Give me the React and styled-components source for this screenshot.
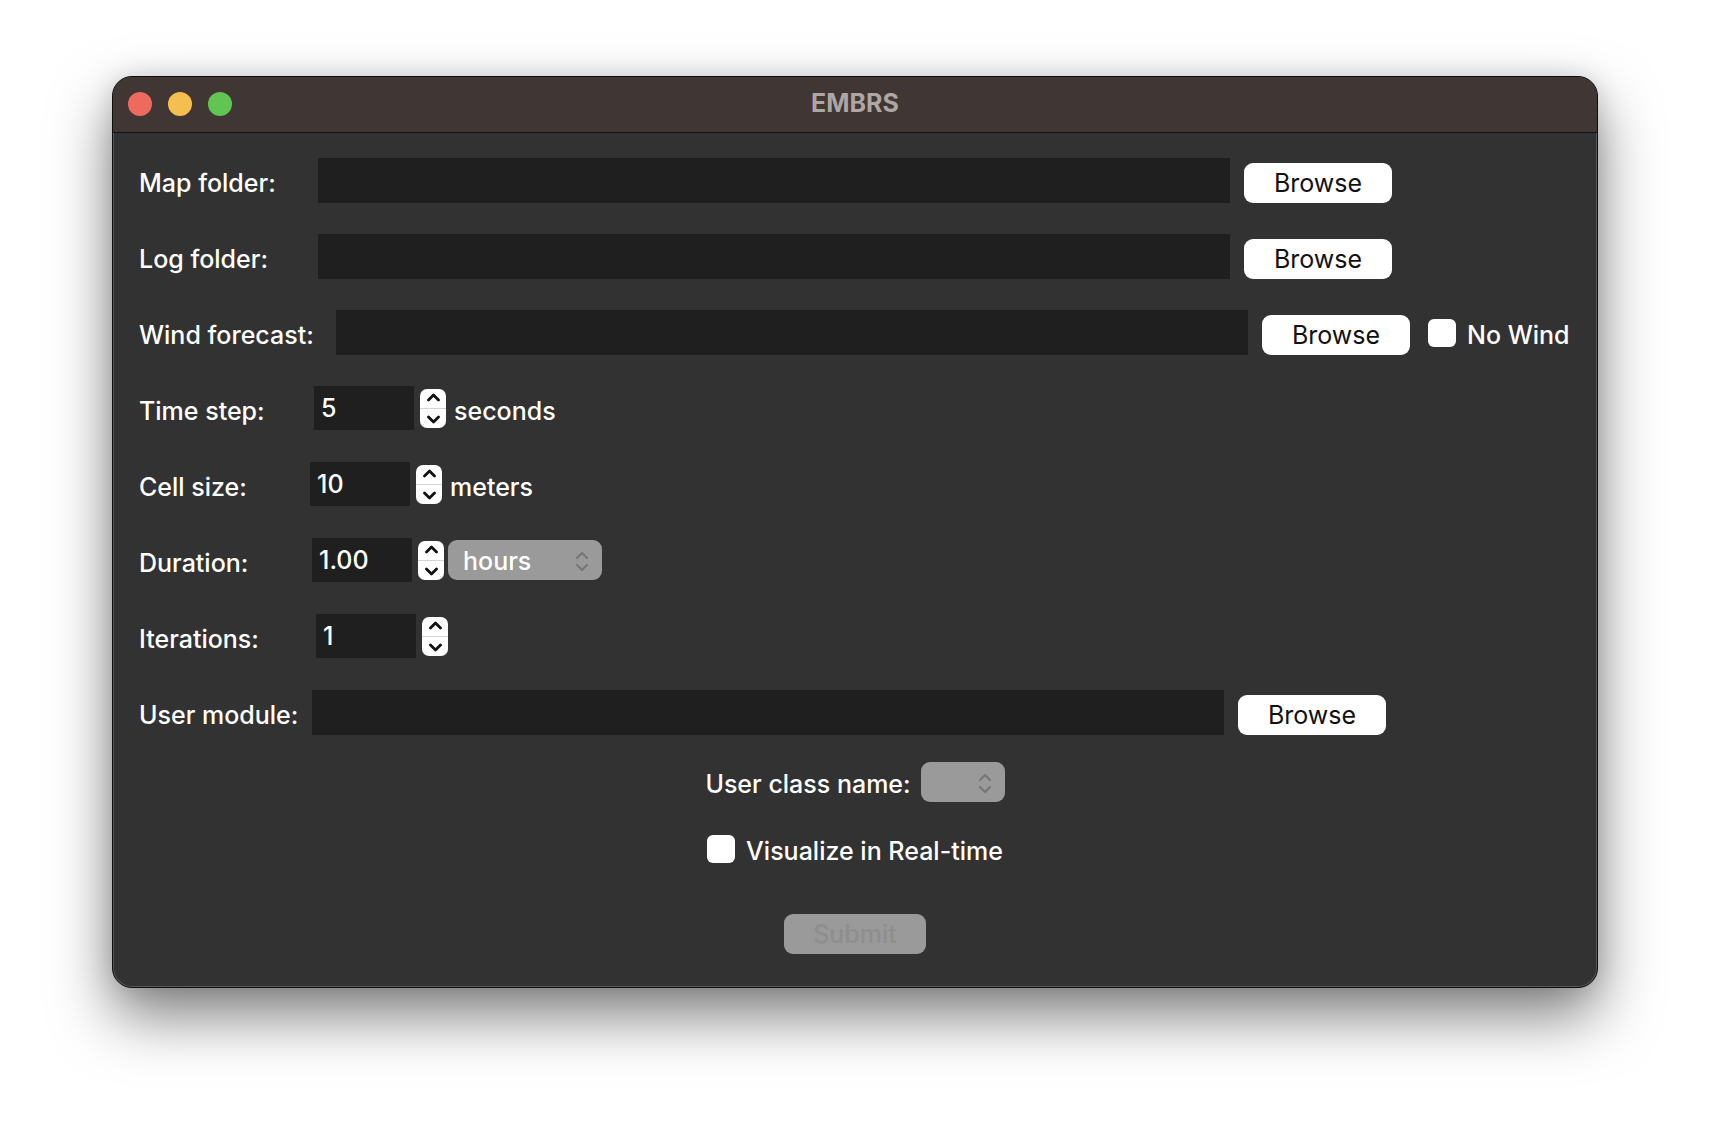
import styled, { createGlobalStyle } from "styled-components";

const GlobalStyle = createGlobalStyle`
    html, body {
        margin: 0;
        padding: 0;
        background: #ffffff;
        font-family: Inter, "Noto Sans", "Liberation Sans", sans-serif;
    }
    * { box-sizing: border-box; }
`;

function Chevrons({ color = "#777" }) {
    return (
        <svg width="14" height="21" viewBox="0 0 14 21">
            <path d="M2 7 L7 2 L12 7" fill="none" stroke={color} strokeWidth="2.2" strokeLinecap="round" strokeLinejoin="round" />
            <path d="M2 14 L7 19 L12 14" fill="none" stroke={color} strokeWidth="2.2" strokeLinecap="round" strokeLinejoin="round" />
        </svg>
    );
}

function Spinner() {
    return (
        <StSpinner>
            <StHalf $top>
                <svg width="13" height="9" viewBox="0 0 13 9">
                    <path d="M1.5 7 L6.5 2 L11.5 7" fill="none" stroke="#111" strokeWidth="2.8" strokeLinecap="round" strokeLinejoin="round" />
                </svg>
            </StHalf>
            <StHalf>
                <svg width="13" height="9" viewBox="0 0 13 9">
                    <path d="M1.5 2 L6.5 7 L11.5 2" fill="none" stroke="#111" strokeWidth="2.8" strokeLinecap="round" strokeLinejoin="round" />
                </svg>
            </StHalf>
        </StSpinner>
    );
}

function PathRow({ label, w }) {
    return (
        <StRow>
            <StLabel $w={w}>{label}</StLabel>
            <StPathInput readOnly />
            <StBrowse>Browse</StBrowse>
        </StRow>
    );
}

function NumberRow({ label, w, value, children }) {
    return (
        <StRow>
            <StLabel $w={w}>{label}</StLabel>
            <StNumInput readOnly defaultValue={value} />
            <Spinner />
            {children}
        </StRow>
    );
}

export default function App() {
    return (
        <>
            <GlobalStyle />
            <StPage>
                <StWindow>
                    <StTitleBar>
                        <StLights>
                            <StLight $c="#ec6a5e" />
                            <StLight $c="#f4bf4f" />
                            <StLight $c="#61c554" />
                        </StLights>
                        <StTitle>EMBRS</StTitle>
                        <div />
                    </StTitleBar>

                    <StBody>
                        <PathRow label="Map folder:" w={179} />
                        <PathRow label="Log folder:" w={179} />

                        <StRow>
                            <StLabel $w={197}>Wind forecast:</StLabel>
                            <StPathInput readOnly />
                            <StBrowse>Browse</StBrowse>
                            <StCheckLabel $gap={18}>
                                <StCheck />
                                No Wind
                            </StCheckLabel>
                        </StRow>

                        <NumberRow label="Time step:" w={175} value="5">
                            <StUnit>seconds</StUnit>
                        </NumberRow>
                        <NumberRow label="Cell size:" w={171} value="10">
                            <StUnit>meters</StUnit>
                        </NumberRow>
                        <NumberRow label="Duration:" w={173} value="1.00">
                            <StSelect $w={154}>
                                <span>hours</span>
                                <Chevrons />
                            </StSelect>
                        </NumberRow>
                        <NumberRow label="Iterations:" w={177} value="1" />

                        <PathRow label="User module:" w={173} />

                        <StCenterRow $h={64}>
                            User class name:
                            <StSelect $w={84} $up>
                                <span />
                                <Chevrons />
                            </StSelect>
                        </StCenterRow>
                        <StCenterRow $h={64}>
                            <StCheckLabel $gap={0}>
                                <StCheck />
                                Visualize in Real-time
                            </StCheckLabel>
                        </StCenterRow>

                        <StSubmit disabled>Submit</StSubmit>
                    </StBody>
                </StWindow>
            </StPage>
        </>
    );
}

const StPage = styled.div`
    width: 1710px;
    height: 1136px;
    padding-top: 76px;
    overflow: hidden;
`;

const StWindow = styled.div`
    width: 1486px;
    height: 912px;
    margin: 0 auto;
    background: #323232;
    border: 1px solid #0e0e0e;
    border-radius: 20px;
    overflow: hidden;
    box-shadow: inset 0 0 0 1px #5a5a5a, 0 28px 60px rgba(0, 0, 0, 0.5), 0 0 24px rgba(0, 0, 0, 0.12);
`;

const StTitleBar = styled.div`
    height: 56px;
    display: grid;
    grid-template-columns: 1fr auto 1fr;
    align-items: center;
    padding: 0 15px;
    background: #403634;
    border-bottom: 1px solid #141212;
`;

const StLights = styled.div`
    display: flex;
    gap: 16px;
    margin-top: -2px;
`;

const StLight = styled.span`
    width: 24px;
    height: 24px;
    border-radius: 50%;
    background: ${(p) => p.$c};
`;

const StTitle = styled.div`
    font-size: 25px;
    font-weight: 700;
    color: #aea6a4;
    margin-top: -4px;
`;

const StBody = styled.div`
    display: flex;
    flex-direction: column;
    padding: 9px 0 0 26px;
    color: #ffffff;
    font-size: 25px;
    font-weight: 500;
`;

const StRow = styled.div`
    height: 76px;
    display: flex;
    align-items: center;
`;

const StLabel = styled.label`
    width: ${(p) => p.$w}px;
    flex: none;
    padding-top: 5px;
`;

const StPathInput = styled.input`
    width: 912px;
    height: 45px;
    flex: none;
    border: none;
    outline: none;
    background: #1f1f1f;
    color: #ffffff;
`;

const StNumInput = styled.input`
    width: 100px;
    height: 44px;
    flex: none;
    border: none;
    outline: none;
    padding: 0 7px;
    background: #1f1f1f;
    color: #ffffff;
    font: inherit;
`;

const StBrowse = styled.button`
    width: 148px;
    height: 40px;
    margin: 6px 0 0 14px;
    flex: none;
    border: none;
    border-radius: 9px;
    background: #ffffff;
    color: #111111;
    font: inherit;
    font-weight: 400;
    padding: 0;
`;

const StSpinner = styled.div`
    width: 26px;
    height: 39px;
    margin-left: 6px;
    display: flex;
    flex-direction: column;
    background: #ffffff;
    border-radius: 7px;
    overflow: hidden;
`;

const StHalf = styled.div`
    flex: 1;
    display: flex;
    align-items: center;
    justify-content: center;
    border-bottom: ${(p) => (p.$top ? "1.5px solid #d4d4d4" : "none")};
    padding-top: ${(p) => (p.$top ? "0" : "2px")};
    padding-bottom: ${(p) => (p.$top ? "2px" : "0")};
`;

const StUnit = styled.span`
    margin-left: 8px;
    padding-top: 5px;
`;

const StSelect = styled.div`
    width: ${(p) => p.$w}px;
    height: 40px;
    margin-left: ${(p) => (p.$w > 100 ? 4 : 10)}px;
    margin-top: ${(p) => (p.$up ? -4 : 0)}px;
    display: flex;
    align-items: center;
    justify-content: space-between;
    padding: 2px 13px 0 15px;
    border-radius: 9px;
    background: #9a9a9a;
    color: #ffffff;
`;

const StCheckLabel = styled.label`
    display: flex;
    align-items: center;
    margin-left: ${(p) => p.$gap}px;
    padding-top: 6px;
`;

const StCheck = styled.span`
    width: 28px;
    height: 28px;
    margin-right: 11px;
    border-radius: 6px;
    background: #ffffff;
    margin-top: -4px;
`;

const StCenterRow = styled.div`
    height: ${(p) => p.$h}px;
    display: flex;
    align-items: center;
    justify-content: center;
    margin-left: -26px;
    padding-top: 4px;
`;

const StSubmit = styled.button`
    align-self: center;
    width: 142px;
    height: 40px;
    margin: 36px 0 0 -26px;
    border: none;
    border-radius: 9px;
    background: #9a9a9a;
    color: #8e8e8e;
    font: inherit;
    padding: 0;
`;
